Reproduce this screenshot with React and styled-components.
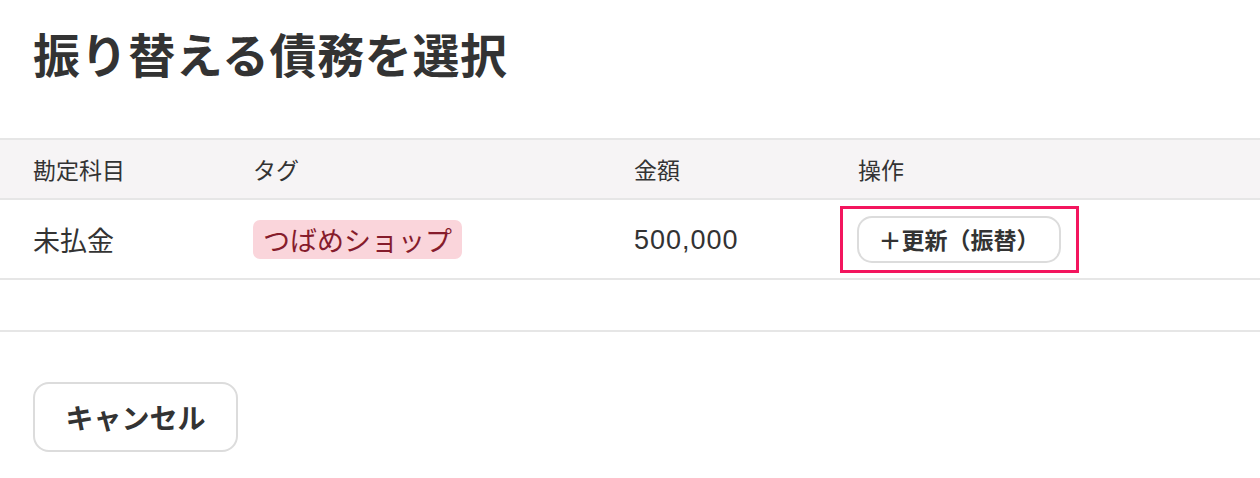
import React from 'react';
import styled, { createGlobalStyle } from 'styled-components';

const Colors = {
  text: '#333333',
  border: '#e6e6e6',
  headBg: '#f6f4f5',
  tagBg: '#fad5db',
  tagText: '#861c2c',
  highlight: '#f3155e',
  buttonBorder: '#dcdcdc',
};

const GlobalStyle = createGlobalStyle`
  html, body {
    margin: 0;
    padding: 0;
    background: #ffffff;
  }
  body {
    font-family: "Noto Sans CJK JP", "Noto Sans", sans-serif;
    color: ${Colors.text};
  }
`;

const Page = styled.div`
  width: 1260px;
  height: 478px;
  overflow: hidden;
  background: #fff;
`;

const Title = styled.h1`
  margin: 0;
  padding: 23px 0 0 33px;
  height: 61px;
  line-height: 60px;
  font-size: 47px;
  font-weight: 700;
  letter-spacing: 0.6px;
  color: ${Colors.text};
`;

const Table = styled.div`
  margin-top: 54px;
  border-top: 2px solid ${Colors.border};
  border-bottom: 2px solid ${Colors.border};
  padding-bottom: 50px;
`;

const Row = styled.div`
  display: grid;
  grid-template-columns: 220px 381px 224px 1fr;
  align-items: center;
  padding-left: 33px;
  height: ${(p) => (p.head ? 58 : 78)}px;
  background: ${(p) => (p.head ? Colors.headBg : '#fff')};
  border-bottom: 2px solid ${Colors.border};
`;

const HeadCell = styled.div`
  font-size: 23px;
  font-weight: 400;
  color: ${Colors.text};
`;

const Cell = styled.div`
  font-size: 27px;
  color: ${Colors.text};
  display: flex;
  align-items: center;
`;

const Amount = styled.span`
  font-family: "Liberation Sans", Arial, sans-serif;
  font-size: 27px;
  letter-spacing: 1px;
  padding-top: 3px;
`;

const Tag = styled.span`
  display: inline-block;
  background: ${Colors.tagBg};
  color: ${Colors.tagText};
  font-size: 27px;
  line-height: 39px;
  padding: 0 10px;
  border-radius: 7px;
`;

const Highlight = styled.div`
  position: relative;
  display: inline-flex;
  margin-left: -1px;
  &::after {
    content: '';
    position: absolute;
    top: -10px;
    bottom: -10px;
    left: -17px;
    right: -18px;
    border: 3.5px solid ${Colors.highlight};
    pointer-events: none;
  }
`;

const Button = styled.button`
  font-family: "Noto Sans CJK JP", sans-serif;
  font-weight: 700;
  color: ${Colors.text};
  background: #fff;
  border: 2px solid ${Colors.buttonBorder};
  border-radius: ${(p) => (p.large ? 16 : 15)}px;
  cursor: pointer;
  display: inline-flex;
  align-items: center;
  justify-content: center;
  padding: 0;
  font-size: ${(p) => (p.large ? 28 : 23)}px;
  width: ${(p) => (p.large ? 205 : 204)}px;
  height: ${(p) => (p.large ? 70 : 47)}px;
`;

const Footer = styled.div`
  padding: 50px 0 0 33px;
`;

export default function App() {
  return (
    <Page>
      <GlobalStyle />
      <Title>振り替える債務を選択</Title>
      <Table>
        <Row head>
          <HeadCell>勘定科目</HeadCell>
          <HeadCell>タグ</HeadCell>
          <HeadCell>金額</HeadCell>
          <HeadCell>操作</HeadCell>
        </Row>
        <Row>
          <Cell>未払金</Cell>
          <Cell>
            <Tag>つばめショップ</Tag>
          </Cell>
          <Cell>
            <Amount>500,000</Amount>
          </Cell>
          <Cell>
            <Highlight>
              <Button>＋更新（振替）</Button>
            </Highlight>
          </Cell>
        </Row>
      </Table>
      <Footer>
        <Button large>キャンセル</Button>
      </Footer>
    </Page>
  );
}
